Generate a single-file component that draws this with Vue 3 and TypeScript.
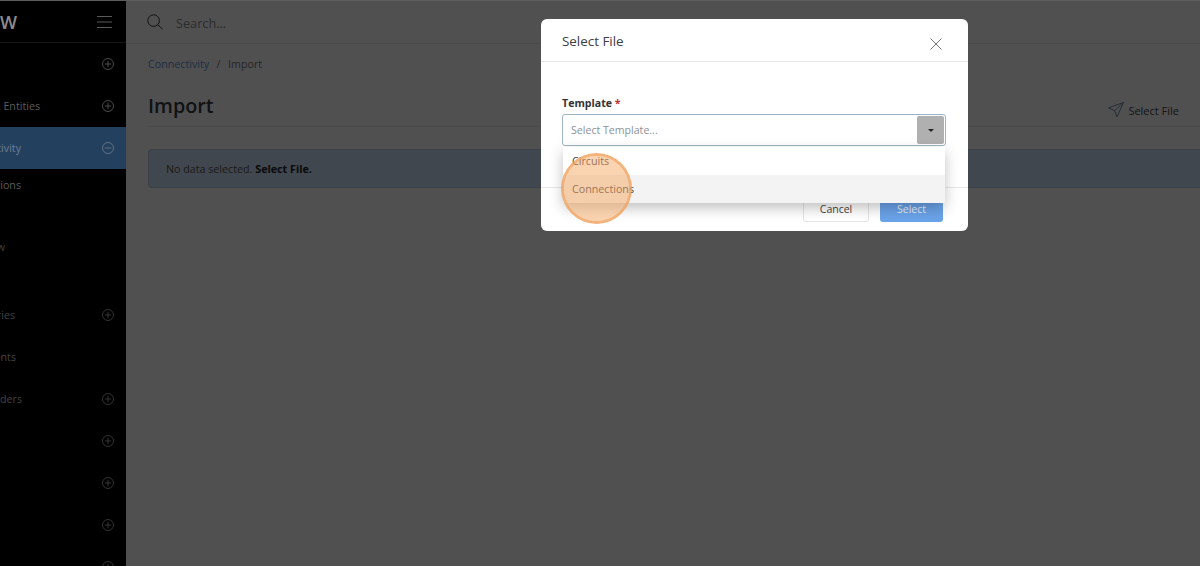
<template>
  <div class="page">
    <aside class="sidebar">
      <div class="brand">
        <span class="brand-name">W</span>
        <svg class="burger" width="15" height="12" viewBox="0 0 15 12" fill="none">
          <path d="M0 0.5H15M0 6H15M0 11.5H15" stroke="currentColor" stroke-width="1" />
        </svg>
      </div>
      <nav class="menu">
        <div
          v-for="item in menu"
          :key="item.label + item.end"
          class="menu-row"
          :class="{ active: item.active, sub: item.sub, tall: item.tall, bright: item.bright }"
        >
          <span class="menu-label" :style="{ width: item.end + 'px' }">{{ item.label }}</span>
          <svg v-if="item.icon" class="menu-icon" width="12" height="12" viewBox="0 0 12 12" fill="none">
            <circle cx="6" cy="6" r="5.5" stroke="currentColor" stroke-width="0.8" />
            <path v-if="item.icon === 'plus'" d="M6 2.8V9.2M2.8 6H9.2" stroke="currentColor" stroke-width="0.8" />
            <path v-else d="M2.8 6H9.2" stroke="currentColor" stroke-width="0.8" />
          </svg>
        </div>
      </nav>
    </aside>

    <main class="content">
      <header class="topbar">
        <svg width="16" height="16" viewBox="0 0 16 16" fill="none" class="search-icon">
          <circle cx="6.6" cy="6.6" r="5.8" stroke="currentColor" stroke-width="1" />
          <path d="M10.8 10.8L15.6 15.2" stroke="currentColor" stroke-width="1" />
        </svg>
        <span class="search-text">Search...</span>
      </header>
      <div class="body">
        <div class="crumbs">
          <span class="crumb-link">Connectivity</span>
          <span class="crumb-sep">/</span>
          <span>Import</span>
        </div>
        <div class="title-row">
          <h1>Import</h1>
          <span class="title-action">
            <svg width="16" height="16" viewBox="0 0 16 16" fill="none">
              <path d="M15.5 0.5L0.5 5.8L6.6 8.6L9 14.8Z M15.5 0.5L6.6 8.6" stroke="#6f87a3" stroke-width="1" stroke-linejoin="round" />
            </svg>
            Select File
          </span>
        </div>
        <div class="alert">No data selected. <b>Select File.</b></div>
      </div>
      <div class="backdrop"></div>
    </main>

    <section class="modal">
      <div class="modal-head">
        <span>Select File</span>
        <svg width="12" height="12" viewBox="0 0 12 12" fill="none" class="close">
          <path d="M0.5 0.5L11.5 11.5M11.5 0.5L0.5 11.5" stroke="currentColor" stroke-width="1" />
        </svg>
      </div>
      <div class="modal-body">
        <label class="field-label">Template <i>*</i></label>
        <div class="select">
          <span class="placeholder">Select Template...</span>
          <span class="select-btn"><b class="caret"></b></span>
        </div>
      </div>
      <div class="modal-foot">
        <button type="button" class="btn btn-cancel">Cancel</button>
        <button type="button" class="btn btn-select">Select</button>
      </div>
    </section>

    <ul class="dropdown">
      <li>Circuits</li>
      <li class="hovered">Connections</li>
    </ul>

    <div class="click-mark"></div>
  </div>
</template>

<script setup lang="ts">
interface MenuItem {
  label: string;
  end: number;
  icon?: 'plus' | 'minus';
  active?: boolean;
  sub?: boolean;
  tall?: boolean;
  bright?: boolean;
}

const menu: MenuItem[] = [
  { label: '', end: 40, icon: 'plus', bright: true },
  { label: 'Assets & Entities', end: 40, icon: 'plus', bright: true },
  { label: 'Connectivity', end: 21, icon: 'minus', active: true },
  { label: 'Connections', end: 21, sub: true, bright: true },
  { label: '', end: 20, sub: true },
  { label: 'View', end: 5, sub: true },
  { label: '', end: 19, sub: true, tall: true },
  { label: 'Inventories', end: 15, icon: 'plus' },
  { label: 'Documents', end: 16 },
  { label: 'Work Orders', end: 22, icon: 'plus' },
  { label: '', end: 30, icon: 'plus' },
  { label: '', end: 31, icon: 'plus' },
  { label: '', end: 32, icon: 'plus' },
  { label: '', end: 33, icon: 'plus' },
];
</script>

<style>
html,
body {
  margin: 0;
  overflow: hidden;
}
</style>

<style scoped>
* {
  box-sizing: border-box;
}

.page {
  position: relative;
  display: flex;
  width: 1200px;
  height: 566px;
  overflow: hidden;
  font-family: "Open Sans", "Noto Sans", sans-serif;
  background: #000;
  color: #212529;
  border-top: 1px solid #5c5c5c;
}

/* the sidebar colours are already the dimmed ones, the backdrop only lies over the content */
.sidebar {
  width: 126px;
  flex: none;
  background: #000;
  overflow: hidden;
}

.brand {
  position: relative;
  display: flex;
  justify-content: flex-end;
  align-items: center;
  height: 42px;
  padding-right: 14px;
  border-bottom: 1px solid #161616;
  padding-top: 1px;
}

.brand-name {
  position: absolute;
  right: 109px;
  top: 9px;
  font-size: 18px;
  line-height: 24px;
  font-weight: 600;
  color: #8c8c8c;
}

.burger {
  color: #5a5a5a;
}

.menu-row {
  display: flex;
  align-items: center;
  justify-content: space-between;
  height: 42px;
  padding-right: 12px;
  font-size: 10.7px;
  color: #404040;
}

.menu-row.bright {
  color: #5c5c5c;
}

.menu-row.sub {
  height: 31px;
}

.menu-row.tall {
  height: 32px;
}

.menu-row.active {
  background: #24405f;
  color: #6d7e91;
}

.menu-label {
  display: flex;
  justify-content: flex-end;
  overflow: hidden;
  white-space: nowrap;
  flex: none;
}

.menu-icon {
  flex: none;
}

.content {
  position: relative;
  flex: 1;
  min-width: 0;
  background: #f8f9fa;
}

.topbar {
  display: flex;
  align-items: center;
  gap: 13px;
  height: 43px;
  padding-left: 21px;
  border-bottom: 1px solid #e4e4e4;
  color: #333;
}

.search-icon {
  margin-top: -1px;
}

.search-text {
  margin-top: 2px;
  font-size: 12.7px;
  color: #888;
}

.body {
  padding: 13px 0 0 22px;
}

.crumbs {
  display: flex;
  gap: 7.5px;
  font-size: 10.7px;
  line-height: 15px;
  color: #777;
}

.crumb-link {
  color: #5b8fd0;
}

.title-row {
  display: flex;
  align-items: center;
  justify-content: space-between;
  height: 42px;
  margin-top: 13px;
  padding-right: 21px;
  border-bottom: 1px solid #e6e6e6;
}

h1 {
  margin: 0;
  font-size: 19.8px;
  line-height: 27px;
  font-weight: 600;
  color: #343a40;
}

.title-action {
  display: flex;
  align-items: center;
  gap: 4px;
  margin-top: 9px;
  font-size: 11px;
  color: #444;
}

.alert {
  display: flex;
  align-items: center;
  gap: 3px;
  height: 39px;
  margin-top: 22px;
  padding: 0 17px;
  font-size: 10.7px;
  color: #555;
  background: #cadcf2;
  border: 1px solid #b4c6dc;
  border-right: 0;
  border-radius: 4px 0 0 4px;
}

.alert b {
  color: #222;
  font-weight: 700;
}

.backdrop {
  position: absolute;
  inset: 0;
  background: rgba(0, 0, 0, 0.68);
}

.modal {
  position: absolute;
  left: 541px;
  top: 18px;
  display: flex;
  flex-direction: column;
  width: 427px;
  height: 212px;
  background: #fff;
  border-radius: 6px;
}

.modal-head {
  display: flex;
  flex: none;
  align-items: center;
  justify-content: space-between;
  height: 43px;
  padding: 2px 26px 0 21px;
  font-size: 13.4px;
  color: #3c4043;
  border-bottom: 1px solid #e4e6e8;
}

.close {
  margin-top: 5px;
  color: #777;
}

.modal-body {
  flex: 1;
  padding: 33px 22px 0 21px;
}

.field-label {
  display: block;
  font-size: 10.6px;
  line-height: 16px;
  font-weight: 700;
  color: #333;
}

.field-label i {
  color: #b33;
  font-style: normal;
}

.select {
  display: flex;
  align-items: center;
  justify-content: space-between;
  height: 32px;
  margin-top: 3px;
  padding: 0 1px 0 8px;
  border: 1px solid #9fb4c2;
  border-radius: 3px;
}

.placeholder {
  font-size: 10.6px;
  color: #8b9299;
}

.select-btn {
  display: flex;
  align-items: center;
  justify-content: center;
  width: 27px;
  height: 28px;
  background: #b0b0b0;
  border-radius: 2px;
}

.caret {
  width: 0;
  height: 0;
  border-left: 3.5px solid transparent;
  border-right: 3.5px solid transparent;
  border-top: 3.5px solid #222;
}

.modal-foot {
  display: flex;
  flex: none;
  align-items: center;
  justify-content: flex-end;
  gap: 11px;
  height: 44px;
  padding: 0 25px 2px 0;
  border-top: 1px solid #e4e6e8;
}

.btn {
  height: 26px;
  padding: 0;
  font: inherit;
  font-size: 10.5px;
  border-radius: 3px;
}

.btn-cancel {
  width: 66px;
  background: #fff;
  border: 1px solid #e4e4e4;
  color: #444;
}

.btn-select {
  width: 63px;
  background: #6aa3e8;
  border: 0;
  color: #e6effa;
}

.dropdown {
  position: absolute;
  left: 563px;
  top: 146px;
  width: 382px;
  height: 56px;
  margin: 0;
  padding: 0;
  list-style: none;
  background: #fff;
  border-radius: 0 0 3px 3px;
  box-shadow: 0 5px 14px rgba(0, 0, 0, 0.25);
  font-size: 10.7px;
  color: #444;
}

.dropdown li {
  height: 28px;
  padding-left: 9px;
  line-height: 28px;
}

.dropdown .hovered {
  background: #f3f3f3;
}

.click-mark {
  position: absolute;
  left: 561px;
  top: 152px;
  width: 71px;
  height: 71px;
  border-radius: 50%;
  background: rgba(245, 168, 100, 0.5);
  border: 3px solid rgba(240, 160, 90, 0.8);
  background-clip: padding-box;
}
</style>
